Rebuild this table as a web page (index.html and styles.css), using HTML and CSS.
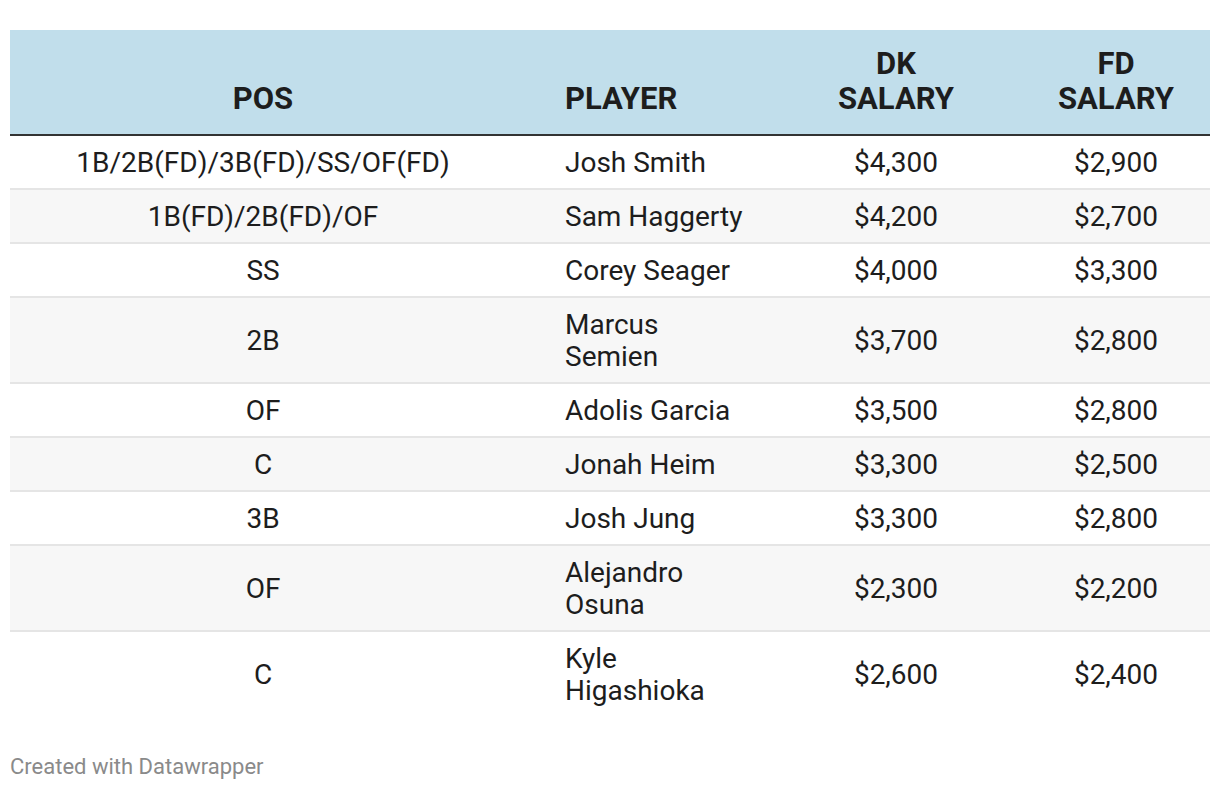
FILE: index.html
```html
<!DOCTYPE html>
<html>
<head>
<meta charset="utf-8">
<link rel="stylesheet" href="styles.css">
</head>
<body>
<div class="chart">
  <table class="tbl">
    <colgroup>
      <col class="c1"><col class="c2"><col class="c3"><col class="c4">
    </colgroup>
    <thead>
      <tr>
        <th class="center">POS</th>
        <th class="left">PLAYER</th>
        <th class="center">DK<br>SALARY</th>
        <th class="center">FD<br>SALARY</th>
      </tr>
    </thead>
    <tbody>
      <tr><td class="center">1B/2B(FD)/3B(FD)/SS/OF(FD)</td><td class="left">Josh Smith</td><td class="center">$4,300</td><td class="center">$2,900</td></tr>
      <tr class="alt"><td class="center">1B(FD)/2B(FD)/OF</td><td class="left">Sam Haggerty</td><td class="center">$4,200</td><td class="center">$2,700</td></tr>
      <tr><td class="center">SS</td><td class="left">Corey Seager</td><td class="center">$4,000</td><td class="center">$3,300</td></tr>
      <tr class="alt"><td class="center">2B</td><td class="left">Marcus Semien</td><td class="center">$3,700</td><td class="center">$2,800</td></tr>
      <tr><td class="center">OF</td><td class="left">Adolis Garcia</td><td class="center">$3,500</td><td class="center">$2,800</td></tr>
      <tr class="alt"><td class="center">C</td><td class="left">Jonah Heim</td><td class="center">$3,300</td><td class="center">$2,500</td></tr>
      <tr><td class="center">3B</td><td class="left">Josh Jung</td><td class="center">$3,300</td><td class="center">$2,800</td></tr>
      <tr class="alt"><td class="center">OF</td><td class="left">Alejandro Osuna</td><td class="center">$2,300</td><td class="center">$2,200</td></tr>
      <tr class="last"><td class="center">C</td><td class="left">Kyle Higashioka</td><td class="center">$2,600</td><td class="center">$2,400</td></tr>
    </tbody>
  </table>
  <div class="footer">Created with Datawrapper</div>
</div>
</body>
</html>
```
FILE: styles.css
```css
html, body {
  margin: 0;
  padding: 0;
  background: #ffffff;
}
body {
  font-family: Roboto, "Liberation Sans", sans-serif;
  color: #1d1d1d;
}
.chart {
  padding: 30px 10px 0 10px;
}
.tbl {
  width: 1200px;
  border-collapse: collapse;
  table-layout: fixed;
}
.c1 { width: 506px; }
.c2 { width: 254px; }
.c3 { width: 252px; }
.c4 { width: 188px; }
.tbl th {
  background: #c1deeb;
  font-weight: 700;
  font-size: 31px;
  line-height: 35px;
  vertical-align: bottom;
  padding: 16px 10px 18px 10px;
  border-bottom: 2px solid #333333;
  color: #1d1d1d;
}
.tbl td {
  font-size: 28px;
  line-height: 32px;
  padding: 11px 10px 9px 10px;
  border-bottom: 2px solid #e5e5e5;
  vertical-align: middle;
}
.tbl tr.last td {
  border-bottom: none;
}
.tbl tr.alt td {
  background: #f7f7f7;
}
.center { text-align: center; }
.tbl .left { text-align: left; padding-left: 49px; padding-right: 25px; }
.footer {
  margin-top: 38px;
  font-size: 22px;
  line-height: 26px;
  color: #8a8a8a;
}
```
